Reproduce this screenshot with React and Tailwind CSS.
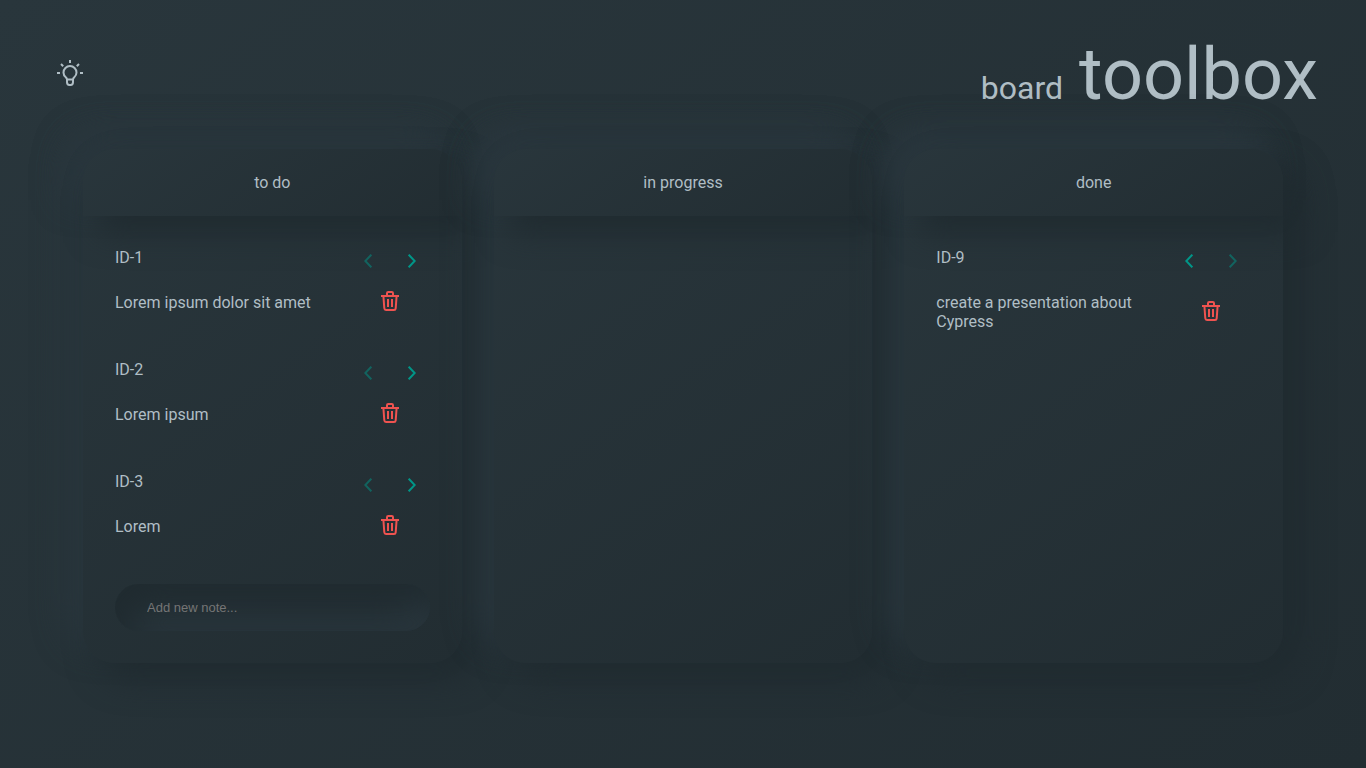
import React, { useState } from "react";

const COLUMNS = ["to do", "in progress", "done"];

const INITIAL_NOTES = [
  { id: 1, column: 0, text: "Lorem ipsum dolor sit amet" },
  { id: 2, column: 0, text: "Lorem ipsum" },
  { id: 3, column: 0, text: "Lorem" },
  { id: 9, column: 2, text: "create a presentation about Cypress" },
];

function BulbIcon() {
  return (
    <svg width="26" height="26" viewBox="0 0 26 26" fill="none" stroke="currentColor" strokeWidth="2" aria-hidden="true">
      <path d="M13 0v3M0 13h3M23 13h3M4 4l2.2 2.2M22 4l-2.2 2.2" />
      <path d="M10 19.5c0-1.2-.5-1.7-1.4-2.4A6.3 6.3 0 0 1 6.5 12.6a6.5 6.5 0 0 1 13 0c0 1.8-.8 3.4-2.1 4.5-.9.7-1.4 1.2-1.4 2.4z" />
      <path d="M10 19.5v2.8c0 1.6 1 2.7 2.4 2.7h1.2c1.4 0 2.4-1.1 2.4-2.7v-2.8" />
    </svg>
  );
}

function Chevron({ direction }) {
  return (
    <svg width="8" height="14" viewBox="0 0 8 14" fill="none" stroke="currentColor" strokeWidth="2" aria-hidden="true">
      <path d={direction === "left" ? "M7.3.7L1.3 7l6 6.3" : "M.7.7L6.7 7l-6 6.3"} />
    </svg>
  );
}

function TrashIcon() {
  return (
    <svg width="18" height="20" viewBox="0 0 18 20" fill="none" stroke="currentColor" strokeWidth="2" aria-hidden="true">
      <path d="M0 5h18M6 5V2.2C6 1.4 6.4 1 7.2 1h3.6c.8 0 1.2.4 1.2 1.2V5" />
      <path d="M2.4 5l.9 12.3C3.4 18.4 4 19 5 19h8c1 0 1.6-.6 1.7-1.7L15.6 5" />
      <path d="M7 8v8M11 8v8" />
    </svg>
  );
}

function Note({ note, onMove, onRemove }) {
  return (
    <li className="mb-12 grid grid-cols-[3fr_1fr] gap-y-[19px]">
      <span className="h-[26px]">ID-{note.id}</span>
      <div className="flex items-center justify-center gap-5 pr-px text-[#009688]">
        <button
          type="button"
          aria-label="Move left"
          className="flex w-6 justify-center disabled:opacity-50"
          disabled={note.column === 0}
          onClick={() => onMove(note.id, -1)}
        >
          <Chevron direction="left" />
        </button>
        <button
          type="button"
          aria-label="Move right"
          className="flex w-6 justify-center disabled:opacity-50"
          disabled={note.column === COLUMNS.length - 1}
          onClick={() => onMove(note.id, 1)}
        >
          <Chevron direction="right" />
        </button>
      </div>
      <p>{note.text}</p>
      <div className="flex items-center justify-center pr-px pb-[3px] text-[#ef5350]">
        <button type="button" aria-label="Delete note" className="-my-1" onClick={() => onRemove(note.id)}>
          <TrashIcon />
        </button>
      </div>
    </li>
  );
}

export default function App() {
  const [notes, setNotes] = useState(INITIAL_NOTES);
  const [draft, setDraft] = useState("");

  const move = (id, step) =>
    setNotes(notes.map((n) => (n.id === id ? { ...n, column: n.column + step } : n)));
  const remove = (id) => setNotes(notes.filter((n) => n.id !== id));
  const add = (event) => {
    event.preventDefault();
    if (!draft.trim()) return;
    const id = Math.max(0, ...notes.map((n) => n.id)) + 1;
    setNotes([...notes, { id, column: 0, text: draft.trim() }]);
    setDraft("");
  };

  return (
    <div className="min-h-screen bg-[linear-gradient(145deg,#29363c,#222d32)] font-['Roboto',sans-serif] text-base leading-[19px] text-[#b0bec5]">
      <header className="flex items-center justify-between px-12 py-8">
        <button type="button" aria-label="Toggle theme" className="mb-1 flex size-11 items-center justify-center">
          <BulbIcon />
        </button>
        <h1 className="flex items-baseline gap-4 text-7xl leading-[85px]">
          <span className="text-[32px] leading-none">board</span>
          <span>toolbox</span>
        </h1>
      </header>
      <main className="mx-auto grid max-w-[1200px] grid-cols-3 gap-8">
        {COLUMNS.map((title, index) => (
          <section
            key={title}
            className="rounded-[32px] bg-[linear-gradient(145deg,#29363c,#222d32)] shadow-[16px_16px_32px_#202b30,-16px_-16px_32px_#2a373e]"
          >
            <h2 className="rounded-t-[32px] bg-[linear-gradient(145deg,#29363c,#222d32)] py-6 text-center shadow-[16px_16px_32px_#202b30,-16px_-16px_32px_#2a373e]">
              {title}
            </h2>
            <div className="px-8 pt-8 pb-8">
              <ul>
                {notes
                  .filter((n) => n.column === index)
                  .map((n) => (
                    <Note key={n.id} note={n} onMove={move} onRemove={remove} />
                  ))}
              </ul>
              {index === 0 && (
                <form onSubmit={add}>
                  <input
                    type="text"
                    aria-label="Add new note"
                    placeholder="Add new note..."
                    value={draft}
                    onChange={(event) => setDraft(event.target.value)}
                    className="block h-[47px] w-full rounded-3xl px-8 font-['Liberation_Sans',sans-serif] text-[13px] shadow-[inset_16px_16px_32px_#202b30,inset_-16px_-16px_32px_#2a373e] outline-none placeholder:text-[#757575]"
                  />
                </form>
              )}
            </div>
          </section>
        ))}
      </main>
    </div>
  );
}
